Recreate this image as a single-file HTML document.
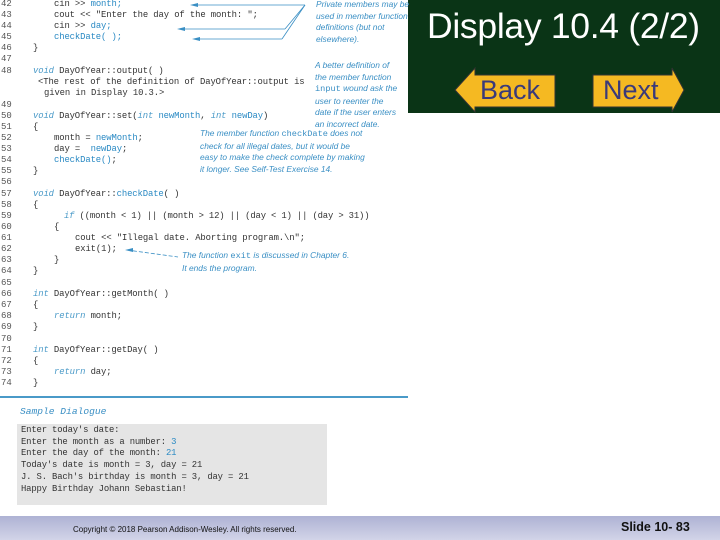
<!DOCTYPE html>
<html><head><style>
body{margin:0;width:720px;height:540px;position:relative;background:#fff;overflow:hidden;font-family:"Liberation Sans",sans-serif}
.c{position:absolute;font-family:"Liberation Mono",monospace;font-size:8.9px;letter-spacing:-0.1px;color:#333;white-space:pre;line-height:11px}
.n{position:absolute;left:1px;font-family:"Liberation Mono",monospace;font-size:9px;color:#555;line-height:11px}
.k{color:#4a9ac8;font-style:italic}
.b{color:#2a8ac4}
.a{position:absolute;font-family:"Liberation Sans",sans-serif;font-style:italic;font-size:8.4px;color:#3a8fc4;line-height:11.5px;white-space:pre}
.a b{font-family:"Liberation Mono",monospace;font-style:normal;font-weight:normal;font-size:8.6px}
</style></head><body>
<div style="position:absolute;left:408px;top:0;width:312px;height:113px;background:#0a3416"></div>
<div style="position:absolute;left:427px;top:6px;font-size:35.5px;color:#fff;letter-spacing:-0.3px">Display 10.4 (2/2)</div>
<svg style="position:absolute;left:450px;top:64px" width="240" height="52">
<polygon points="5,26 25,4 25,11 105,11 105,43 25,43 25,48" fill="#f5b922" stroke="#333" stroke-width="1"/>
<polygon points="143,11 222,11 222,4 234,26 222,48 222,43 143,43" fill="#f5b922" stroke="#333" stroke-width="1"/>
</svg>
<div style="position:absolute;left:480px;top:75px;font-size:27px;color:#3a3a7a">Back</div>
<div style="position:absolute;left:603px;top:75px;font-size:27px;color:#3a3a7a">Next</div>

<div class="n" style="top:-1px">42</div><div class="c" style="left:54px;top:-1px">cin &gt;&gt; <span class="b">month;</span></div>
<div class="n" style="top:10px">43</div><div class="c" style="left:54px;top:10px">cout &lt;&lt; "Enter the day of the month: ";</div>
<div class="n" style="top:21px">44</div><div class="c" style="left:54px;top:21px">cin &gt;&gt; <span class="b">day;</span></div>
<div class="n" style="top:32px">45</div><div class="c" style="left:54px;top:32px"><span class="b">checkDate( );</span></div>
<div class="n" style="top:43px">46</div><div class="c" style="left:33px;top:43px">}</div>
<div class="n" style="top:54px">47</div>
<div class="n" style="top:66px">48</div><div class="c" style="left:33px;top:66px"><span class="k">void</span> DayOfYear::output( )</div>
<div class="c" style="left:38px;top:77px">&lt;The rest of the definition of DayOfYear::output is</div>
<div class="c" style="left:44px;top:88px">given in Display 10.3.&gt;</div>
<div class="n" style="top:100px">49</div>
<div class="n" style="top:111px">50</div><div class="c" style="left:33px;top:111px"><span class="k">void</span> DayOfYear::set(<span class="k">int</span> <span class="b">newMonth</span>, <span class="k">int</span> <span class="b">newDay</span>)</div>
<div class="n" style="top:122px">51</div><div class="c" style="left:33px;top:122px">{</div>
<div class="n" style="top:133px">52</div><div class="c" style="left:54px;top:133px">month = <span class="b">newMonth</span>;</div>
<div class="n" style="top:144px">53</div><div class="c" style="left:54px;top:144px">day =  <span class="b">newDay</span>;</div>
<div class="n" style="top:155px">54</div><div class="c" style="left:54px;top:155px"><span class="b">checkDate()</span>;</div>
<div class="n" style="top:166px">55</div><div class="c" style="left:33px;top:166px">}</div>
<div class="n" style="top:177px">56</div>
<div class="n" style="top:189px">57</div><div class="c" style="left:33px;top:189px"><span class="k">void</span> DayOfYear::<span class="b">checkDate</span>( )</div>
<div class="n" style="top:200px">58</div><div class="c" style="left:33px;top:200px">{</div>
<div class="n" style="top:211px">59</div><div class="c" style="left:64px;top:211px;letter-spacing:-0.15px"><span class="k">if</span> ((month &lt; 1) || (month &gt; 12) || (day &lt; 1) || (day &gt; 31))</div>
<div class="n" style="top:222px">60</div><div class="c" style="left:54px;top:222px">{</div>
<div class="n" style="top:233px">61</div><div class="c" style="left:75px;top:233px">cout &lt;&lt; "Illegal date. Aborting program.\n";</div>
<div class="n" style="top:244px">62</div><div class="c" style="left:75px;top:244px">exit(1);</div>
<div class="n" style="top:255px">63</div><div class="c" style="left:54px;top:255px">}</div>
<div class="n" style="top:266px">64</div><div class="c" style="left:33px;top:266px">}</div>
<div class="n" style="top:278px">65</div>
<div class="n" style="top:289px">66</div><div class="c" style="left:33px;top:289px"><span class="k">int</span> DayOfYear::getMonth( )</div>
<div class="n" style="top:300px">67</div><div class="c" style="left:33px;top:300px">{</div>
<div class="n" style="top:311px">68</div><div class="c" style="left:54px;top:311px"><span class="k">return</span> month;</div>
<div class="n" style="top:322px">69</div><div class="c" style="left:33px;top:322px">}</div>
<div class="n" style="top:334px">70</div>
<div class="n" style="top:345px">71</div><div class="c" style="left:33px;top:345px"><span class="k">int</span> DayOfYear::getDay( )</div>
<div class="n" style="top:356px">72</div><div class="c" style="left:33px;top:356px">{</div>
<div class="n" style="top:367px">73</div><div class="c" style="left:54px;top:367px"><span class="k">return</span> day;</div>
<div class="n" style="top:378px">74</div><div class="c" style="left:33px;top:378px">}</div>

<div class="a" style="left:316px;top:-1px">Private members may be
used in member function
definitions (but not
elsewhere).</div>
<div class="a" style="left:315px;top:60px">A better definition of
the member function
<b>input</b> wound ask the
user to reenter the
date if the user enters
an incorrect date.</div>
<div class="a" style="left:200px;top:128px">The member function <b>checkDate</b> does not
check for all illegal dates, but it would be
easy to make the check complete by making
it longer. See Self-Test Exercise 14.</div>
<div class="a" style="left:182px;top:250px">The function <b>exit</b> is discussed in Chapter 6.
It ends the program.</div>
<svg style="position:absolute;left:0;top:0" width="410" height="280">
<g stroke="#3a8fc4" stroke-width="0.8" fill="none">
<line x1="193" y1="5" x2="305" y2="5"/><line x1="305" y1="5" x2="285" y2="29"/><line x1="285" y1="29" x2="180" y2="29"/>
<line x1="305" y1="5" x2="282" y2="39"/><line x1="282" y1="39" x2="195" y2="39"/>
<line x1="127" y1="250" x2="178" y2="257" stroke-dasharray="4,2"/>
</g>
<g fill="#3a8fc4"><polygon points="190,5 198,3 198,7"/><polygon points="177,29 185,27 185,31"/><polygon points="192,39 200,37 200,41"/><polygon points="125,250 133,248 133,252"/></g>
</svg>

<div style="position:absolute;left:0;top:396px;width:408px;height:1.5px;background:#4a9ac8"></div>
<div style="position:absolute;left:20px;top:406px;font-family:'Liberation Mono',monospace;font-style:italic;font-size:9.6px;color:#3a8fc4">Sample Dialogue</div>
<div style="position:absolute;left:17px;top:424px;width:310px;height:81px;background:#e5e5e5"></div>
<div class="c" style="left:21px;top:425px;line-height:11.7px;letter-spacing:-0.15px">Enter today's date:
Enter the month as a number: <span class="b">3</span>
Enter the day of the month: <span class="b">21</span>
Today's date is month = 3, day = 21
J. S. Bach's birthday is month = 3, day = 21
Happy Birthday Johann Sebastian!</div>

<div style="position:absolute;left:0;top:516px;width:720px;height:24px;background:linear-gradient(#aeb2d4,#d2d4e8)"></div>
<div style="position:absolute;left:73px;top:525px;font-size:8px;color:#111">Copyright © 2018 Pearson Addison-Wesley.  All rights reserved.</div>
<div style="position:absolute;left:621px;top:520px;font-size:12.5px;font-weight:bold;color:#111">Slide 10- 83</div>
</body></html>
